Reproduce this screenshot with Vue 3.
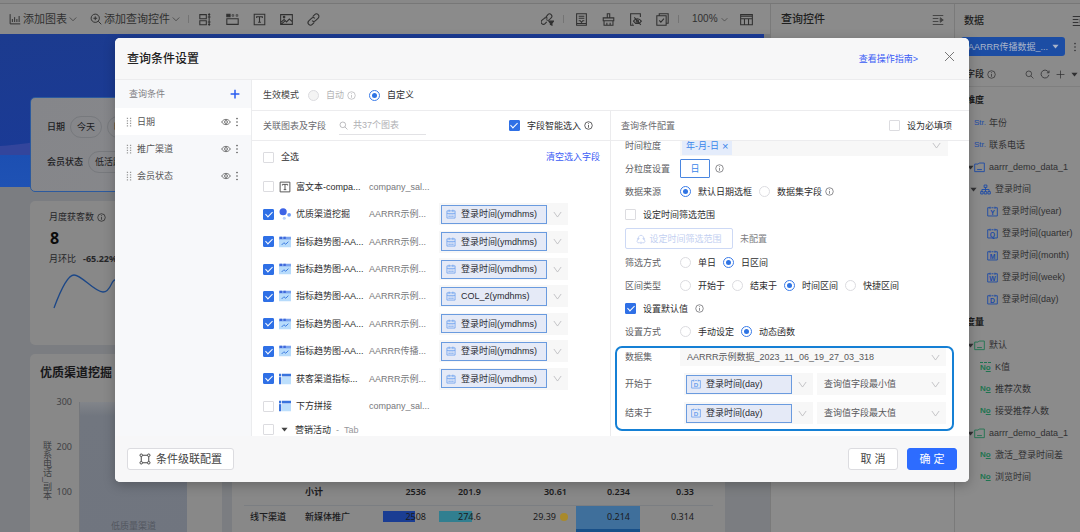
<script setup>
import { ref } from 'vue'

const icons = {
  chart: '<path d="M1.5 1.5v13h13.5M4.5 12V8M7.5 12V5.5M10.5 12V8M13.5 12V4"/>',
  zoomIn: '<circle cx="7" cy="7" r="5.5"/><path d="M11 11l4 4M4.5 7h5M7 4.5v5"/>',
  chevron: '<path d="M1.500 5l6.500 6.500L14.500 5"/>',
  down: '<path d="M1.500 3.500L8 12.500l6.500-9"/>',
  caret: '<path d="M1 4h14l-7 8.500z" fill="currentColor" stroke="none"/>',
  blocks: '<path d="M1 2h8v5H1zM1 9.500h8v5H1zM12.500 1v14M10.800 5h3.400M10.800 11h3.400M11.300 2.500l1.200-1.500 1.200 1.500M11.300 13.500l1.200 1.500 1.200-1.500"/>',
  tabs: '<path d="M1 7h14v7H1z"/><path d="M1 1.500h4v3H1z" fill="currentColor"/><path d="M7.500 2h2v2h-2zM12.500 2h2v2h-2z" stroke-width=".8"/>',
  text: '<path d="M1.500 1.500h13v13h-13zM4.500 6V4.500h7V6M8 4.500v7M6.300 11.500h3.400"/>',
  image: '<path d="M.8 2h14.400v12H.8zM1 11.500l4-3.500 3 3 3.500-3.500 3.500 3M1 14l5-4"/><circle cx="5" cy="5" r="1"/>',
  link: '<path d="M7 4.500l2.500-2.500a3 3 0 0 1 4.300 4.300L10.500 9.500a3 3 0 0 1-4.200 0M9 11.500l-2.500 2.500a3 3 0 0 1-4.300-4.300L5.500 6.500a3 3 0 0 1 4.200 0"/>',
  linkFilter: '<path d="M6 5l2.500-3a2.800 2.800 0 0 1 4 4L10.500 8a2.800 2.800 0 0 1-4 0M7 11l-2 2a2.800 2.800 0 0 1-4-4L4 6.500a2.800 2.800 0 0 1 4 0"/><path d="M9.500 10h6l-2 2.500V15l-2-1v-1.500z" fill="currentColor"/>',
  doc: '<path d="M2 1h12v14H2zM4.500 4h7M4.500 6.500h7M4.500 9.500h2l1.500 2 1.500-2h2M2 13h12"/>',
  brush: '<path d="M6.500 1h3v5h-3zM1.500 6h13v3.500h-13zM2.500 9.500V15h11V9.500M6 15v-3M10 15v-3"/>',
  hidden: '<path d="M14 5V1H2v14h4M4 13.500h1"/><path d="M5.500 10c2.500-4 7-4 9.700 0-2.700 4-7.200 4-9.700 0z"/><circle cx="10.300" cy="10" r="1.500"/><path d="M6.500 5.500l8 9"/>',
  multi: '<path d="M4 3.500V1h11v11.500h-2.500M1 3.500h11.500V15H1zM4 9l2 2.300L9.800 7"/>',
  table: '<path d="M.8 2h14.400v12.500H.8zM.8 4h14.400M.8 7h14.400M5.500 7v7.500M10.500 7v7.500"/>',
  collapse: '<path d="M1 2h14M1 6h7.500M1 10h7.500M1 14h14"/><path d="M11 5l4 3-4 3z" fill="currentColor"/>',
  search: '<circle cx="6.800" cy="6.800" r="5"/><path d="M10.500 10.500l4.500 4.500"/>',
  refresh: '<path d="M13.800 5.500A6.300 6.300 0 1 0 14.200 9.500M14.500 2.500v3.500H11"/>',
  plus: '<path d="M8 1v14M1 8h14"/>',
  close: '<path d="M1.500 1.500l13 13M14.500 1.500l-13 13"/>',
  info: '<circle cx="8" cy="8" r="6.700"/><path d="M8 7v5M8 4v1.500"/>',
  eye: '<path d="M1 8c3.500-5.600 10.500-5.600 14 0-3.500 5.600-10.500 5.600-14 0z"/><circle cx="8" cy="8" r="2.300"/>',
  dots: '<g fill="currentColor" stroke="none"><circle cx="8" cy="2.500" r="1.300"/><circle cx="8" cy="8" r="1.300"/><circle cx="8" cy="13.500" r="1.300"/></g>',
  grip: '<g fill="currentColor" stroke="none"><path d="M4.500 1h2v2h-2zM9.500 1h2v2h-2zM4.500 5h2v2h-2zM9.500 5h2v2h-2zM4.500 9h2v2h-2zM9.500 9h2v2h-2zM4.500 13h2v2h-2zM9.500 13h2v2h-2z"/></g>',
  calendar: '<path d="M1.500 3h13v11.500h-13zM1.500 7h13M5 1v3.500M11 1v3.500M4 9.500h2M7 9.500h2M10 9.500h2M4 12h2M7 12h2M10 12h2"/>',
  folder: '<path d="M1 14V3h5l1.500-1.500H15V14zM4.500 11h7"/>',
  tree: '<path d="M6 1.500h4v3.500H6zM1 11h3.500v3.500H1zM6.200 11h3.600v3.500H6.200zM11.500 11H15v3.500h-3.500zM8 5v6M2.800 11V8h10.400v3"/>',
  cascade: '<path d="M3 5v6M13 5v6M5 3h6M5 13h6"/><circle cx="3" cy="3" r="1.700"/><circle cx="13" cy="3" r="1.700"/><circle cx="3" cy="13" r="1.700"/><circle cx="13" cy="13" r="1.700"/>',
  range: '<path d="M4.500 8A4 4 0 1 1 11.500 8M4 7l-2.500 4.500 1.500 2.500h3M12 7l2.500 4.500-1.500 2.500h-3"/><circle cx="8" cy="14" r="1.200"/><circle cx="3.500" cy="7.500" r="1.200"/><circle cx="12.500" cy="7.500" r="1.200"/>',
  bubble: '<g stroke="none"><circle cx="5.500" cy="5" r="4.800" fill="#3d63e6"/><circle cx="13.500" cy="9" r="2.500" fill="#6f9df5"/><circle cx="7" cy="13.500" r="2" fill="#b9d3fb"/></g>',
  trend: '<g stroke="none"><path d="M0 2h16v13H0z" fill="#b7dbfb"/><path d="M0 1h16v3.500H0z" fill="#7aa3ee"/><path d="M1 1h3v3H1zM6 1h3v3H6z" fill="#3f67da"/></g><path d="M3.500 12l3-3 2.500 2 3.500-3.500" stroke="#3d7be0" stroke-width="1.300"/>',
  pivot: '<g stroke="none"><path d="M4 5h12v10H4z" fill="#bddffc"/><path d="M4 1h12v3.500H4z" fill="#3a74dd"/><path d="M0 1h3v3.500H0z" fill="#3a74dd"/><path d="M0 5.500h3V15H0z" fill="#3a74dd"/></g>'
}

const leftTools = ['blocks', 'tabs', 'text', 'image', 'link']
const midTools = ['doc', 'brush', 'hidden', 'multi']

const conditions = ['日期', '推广渠道', '会员状态']

const time = '登录时间(ymdhms)'
const charts = ref([
  { on: false, icon: 'text', name: '富文本-compa...', set: 'company_sal...' },
  { on: true, icon: 'bubble', name: '优质渠道挖掘', set: 'AARRR示例...', field: time },
  { on: true, icon: 'trend', name: '指标趋势图-AA...', set: 'AARRR示例...', field: time },
  { on: true, icon: 'trend', name: '指标趋势图-AA...', set: 'AARRR示例...', field: time },
  { on: true, icon: 'trend', name: '指标趋势图-AA...', set: 'AARRR示例...', field: 'COL_2(ymdhms)' },
  { on: true, icon: 'trend', name: '指标趋势图-AA...', set: 'AARRR示例...', field: time },
  { on: true, icon: 'trend', name: '指标趋势图-AA...', set: 'AARRR传播...', field: time },
  { on: true, icon: 'pivot', name: '获客渠道指标...', set: 'AARRR示例...', field: time },
  { on: false, icon: 'pivot', name: '下方拼接', set: 'company_sal...' }
])

const mode = ref('custom')
const smart = ref(true)
const useDefault = ref(true)
const source = ref('默认日期选框')
const filterBy = ref('日区间')
const rangeType = ref('时间区间')
const setBy = ref('动态函数')

const bounds = [
  { label: '开始于', value: '查询值字段最小值' },
  { label: '结束于', value: '查询值字段最大值' }
]

const fields = [
  { kind: 'str', level: 1, name: '年份' },
  { kind: 'str', level: 1, name: '联系电话' },
  { kind: 'folder', level: 1, name: 'aarrr_demo_data_1' },
  { kind: 'tree', level: 2, name: '登录时间' },
  { kind: 'cal', mark: 'Y', level: 3, name: '登录时间(year)' },
  { kind: 'cal', mark: 'Q', level: 3, name: '登录时间(quarter)' },
  { kind: 'cal', mark: 'M', level: 3, name: '登录时间(month)' },
  { kind: 'cal', mark: 'W', level: 3, name: '登录时间(week)' },
  { kind: 'cal', mark: 'D', level: 3, name: '登录时间(day)' }
]
const measures = [
  { kind: 'folder', level: 1, name: '默认' },
  { kind: 'calc', level: 2, name: 'K值' },
  { kind: 'num', level: 2, name: '推荐次数' },
  { kind: 'num', level: 2, name: '接受推荐人数' },
  { kind: 'folder', level: 1, name: 'aarrr_demo_data_1' },
  { kind: 'num', level: 2, name: '激活_登录时间差' },
  { kind: 'num', level: 2, name: '浏览时间' }
]
const fieldGroups = [
  { title: '维度', tone: 'blue', items: fields },
  { title: '度量', tone: 'green', items: measures }
]
</script>

<template>
  <div class="app">
    <div class="strip"></div>
    <div class="workspace">
      <main class="editor">
        <header class="toolbar">
          <button class="menu" type="button">
            <svg class="ic i12" viewBox="0 0 16 16" v-html="icons.chart"></svg>添加图表<svg class="ic i8" viewBox="0 0 16 16" v-html="icons.chevron"></svg>
          </button>
          <button class="menu second" type="button">
            <svg class="ic i12" viewBox="0 0 16 16" v-html="icons.zoomIn"></svg>添加查询控件<svg class="ic i8" viewBox="0 0 16 16" v-html="icons.chevron"></svg>
          </button>
          <i class="sep"></i>
          <div class="tools">
            <button v-for="t in leftTools" :key="t" type="button" :aria-label="t"><svg class="ic i14" viewBox="0 0 16 16" v-html="icons[t]"></svg></button>
          </div>
          <div class="tools right">
            <button type="button" aria-label="linkFilter"><svg class="ic i14" viewBox="0 0 16 16" v-html="icons.linkFilter"></svg></button>
          </div>
          <i class="sep near"></i>
          <div class="tools">
            <button v-for="t in midTools" :key="t" type="button" :aria-label="t"><svg class="ic i14" viewBox="0 0 16 16" v-html="icons[t]"></svg></button>
          </div>
          <i class="sep near"></i>
          <label class="zoom">
            <select aria-label="zoom"><option>100%</option></select>
            <svg class="ic i6" viewBox="0 0 16 16" v-html="icons.chevron"></svg>
          </label>
          <button type="button" aria-label="table"><svg class="ic i14" viewBox="0 0 16 16" v-html="icons.table"></svg></button>
        </header>

        <div class="canvas">
          <div class="hero"><svg class="wave" viewBox="0 0 120 20" preserveAspectRatio="none"><path d="M0 11C40 8 60 1 120 0v20H0z" /></svg></div>
          <section class="filters">
            <div class="filter"><b>日期</b><button class="pill" type="button">今天</button><button class="pill" type="button">昨天</button></div>
            <div class="filter"><b>会员状态</b><button class="pill" type="button">低活跃</button></div>
          </section>
          <section class="card metric">
            <p class="mlabel">月度获客数 <svg class="ic i8" viewBox="0 0 16 16" v-html="icons.info"></svg></p>
            <p class="mvalue">8</p>
            <p class="mlabel">月环比 <b>-65.22%</b></p>
            <svg class="spark" viewBox="0 0 84 38">
              <path d="M1 36C8 17 15 3 21 3c8 0 20 17 29 17 8 0 8-12 12-12 8 0 12 14 20 16" />
            </svg>
          </section>
          <div class="lower">
            <section class="card bubble">
              <h3>优质渠道挖掘</h3>
              <div class="plot">
                <span class="axis-name">联系电话_副本</span>
                <div class="ticks"><span>300</span><span>200</span><span>100</span><span>0</span></div>
                <div class="area"><span>低质量渠道</span></div>
              </div>
            </section>
            <section class="card grid-card">
              <table>
                <colgroup><col class="c0" /><col class="c1" /><col class="c2" /><col class="c3" /><col class="c4" /><col class="c5" /><col class="c6" /><col /></colgroup>
                <tbody>
                  <tr class="total"><td></td><td>小计</td><td class="n">2536</td><td class="n">201.9</td><td class="n">30.61</td><td class="n">0.234</td><td class="n">0.33</td><td></td></tr>
                  <tr>
                    <td class="strong">线下渠道</td><td class="strong">新媒体推广</td>
                    <td class="n"><span class="bar deep">2508</span></td>
                    <td class="n"><span class="bar teal">274.6</span></td>
                    <td class="n coin">29.39<i></i></td>
                    <td class="n heat">0.214</td><td class="n">0.314</td><td></td>
                  </tr>
                  <tr class="next"><td></td><td></td><td></td><td></td><td></td><td class="heat2"></td><td></td><td></td></tr>
                </tbody>
              </table>
            </section>
          </div>
        </div>
      </main>

      <aside class="controls">
        <h2>查询控件</h2>
        <button type="button" aria-label="collapse"><svg class="ic i12" viewBox="0 0 16 16" v-html="icons.collapse"></svg></button>
      </aside>

      <aside class="data">
        <div class="data-head"><h2>数据</h2><svg class="ic i12" viewBox="0 0 16 16" v-html="icons.collapse"></svg></div>
        <div class="dataset">
          <button class="ds" type="button"><span>AARRR传播数据_...</span><svg class="ic i6" viewBox="0 0 16 16" v-html="icons.caret"></svg></button>
          <svg class="ic i10" viewBox="0 0 16 16" v-html="icons.dots"></svg>
        </div>
        <div class="field-bar">
          <b>字段</b><svg class="ic i8" viewBox="0 0 16 16" v-html="icons.info"></svg>
          <span class="acts">
            <svg class="ic i9" viewBox="0 0 16 16" v-html="icons.search"></svg>
            <svg class="ic i10" viewBox="0 0 16 16" v-html="icons.refresh"></svg>
            <svg class="ic i8" viewBox="0 0 16 16" v-html="icons.plus"></svg>
            <svg class="ic i6" viewBox="0 0 16 16" v-html="icons.caret"></svg>
          </span>
        </div>
        <div v-for="g in fieldGroups" :key="g.title" :class="['group', g.tone]">
          <h4>{{ g.title }}</h4>
          <ul>
            <li v-for="(f, i) in g.items" :key="i" :class="'l' + f.level">
              <span class="fold"><svg v-if="f.kind === 'folder' || f.kind === 'tree'" class="ic i6" viewBox="0 0 16 16" v-html="icons.caret"></svg></span>
              <span class="fi">
                <template v-if="f.kind === 'str'">Str.</template>
                <span v-else-if="f.kind === 'num'" class="num">N<u>o</u></span>
                <span v-else-if="f.kind === 'calc'" class="num calc">N<u>o</u></span>
                <svg v-else-if="f.kind === 'cal'" class="ic i11" viewBox="0 0 16 16"><path d="M5 2.500H1v12h14v-12h-4M4.500 1v3M11.500 1v3M6.500 2.500h3" /><text x="8" y="12.500" text-anchor="middle">{{ f.mark }}</text></svg>
                <svg v-else class="ic i11" viewBox="0 0 16 16" v-html="icons[f.kind]"></svg>
              </span>
              {{ f.name }}
            </li>
          </ul>
        </div>
      </aside>
    </div>

    <div class="layer">
      <section class="modal" role="dialog" aria-labelledby="dlg-title">
        <header class="m-head">
          <h1 id="dlg-title">查询条件设置</h1>
          <a href="#guide">查看操作指南&gt;</a>
          <button type="button" aria-label="close"><svg class="ic i11" viewBox="0 0 16 16" v-html="icons.close"></svg></button>
        </header>
        <div class="m-body">
          <nav class="side">
            <div class="side-head">查询条件<button type="button" aria-label="add"><svg class="ic i10" viewBox="0 0 16 16" v-html="icons.plus"></svg></button></div>
            <div v-for="(c, i) in conditions" :key="c" :class="['cond', { active: i === 0 }]">
              <svg class="ic i10 grip" viewBox="0 0 16 16" v-html="icons.grip"></svg>
              <span>{{ c }}</span>
              <button type="button" aria-label="toggle"><svg class="ic i10" viewBox="0 0 16 16" v-html="icons.eye"></svg></button>
              <button type="button" aria-label="more"><svg class="ic i10" viewBox="0 0 16 16" v-html="icons.dots"></svg></button>
            </div>
          </nav>

          <div class="main">
            <div class="mode">
              <span>生效模式</span>
              <label class="opt off"><input v-model="mode" type="radio" name="mode" value="auto" disabled />自动 <svg class="ic i8 tail" viewBox="0 0 16 16" v-html="icons.info"></svg></label>
              <label class="opt"><input v-model="mode" type="radio" name="mode" value="custom" />自定义</label>
            </div>
            <div class="panes">
              <div class="pane linked">
                <div class="p-head">
                  <span>关联图表及字段</span>
                  <label class="search"><svg class="ic i9" viewBox="0 0 16 16" v-html="icons.search"></svg><input type="text" aria-label="search" placeholder="共37个图表" /></label>
                  <label class="opt"><input v-model="smart" type="checkbox" />字段智能选入 <svg class="ic i8 tail" viewBox="0 0 16 16" v-html="icons.info"></svg></label>
                </div>
                <div class="all">
                  <label class="opt"><input type="checkbox" />全选</label>
                  <button type="button">清空选入字段</button>
                </div>
                <div class="list">
                  <div v-for="(c, i) in charts" :key="i" class="row">
                    <label class="opt name"><input v-model="c.on" type="checkbox" /><svg class="ic i12" viewBox="0 0 16 16" v-html="icons[c.icon]"></svg>{{ c.name }}</label>
                    <span class="set">{{ c.set }}</span>
                    <button v-if="c.field" class="chip-select" type="button" aria-haspopup="listbox">
                      <span class="chip"><svg class="ic i10" viewBox="0 0 16 16" v-html="icons.calendar"></svg>{{ c.field }}</span>
                      <svg class="ic i8" viewBox="0 0 16 16" v-html="icons.down"></svg>
                    </button>
                  </div>
                  <div class="row tab">
                    <label class="opt"><input type="checkbox" /><svg class="ic i6" viewBox="0 0 16 16" v-html="icons.caret"></svg>营销活动</label>
                    <span class="muted">- &nbsp;Tab</span>
                  </div>
                </div>
              </div>

              <div class="pane config">
                <div class="p-head">
                  <span>查询条件配置</span>
                  <label class="opt"><input type="checkbox" />设为必填项</label>
                </div>
                <div class="form">
                  <div class="f">
                    <span class="lab">时间粒度</span>
                    <div class="multi"><button class="tag" type="button">年-月-日 <b>×</b></button><svg class="ic i8" viewBox="0 0 16 16" v-html="icons.down"></svg></div>
                  </div>
                  <div class="f"><span class="lab">分粒度设置</span><button class="day" type="button">日</button><svg class="ic i8" viewBox="0 0 16 16" v-html="icons.info"></svg></div>
                  <div class="f">
                    <span class="lab">数据来源</span>
                    <label v-for="o in ['默认日期选框', '数据集字段']" :key="o" class="opt"><input v-model="source" type="radio" name="source" :value="o" />{{ o }}</label>
                    <svg class="ic i8 tail" viewBox="0 0 16 16" v-html="icons.info"></svg>
                  </div>
                  <div class="f"><label class="opt"><input type="checkbox" />设定时间筛选范围</label></div>
                  <div class="f tall">
                    <button class="range" type="button" disabled><svg class="ic i10" viewBox="0 0 16 16" v-html="icons.range"></svg>设定时间筛选范围</button>
                    <span class="state">未配置</span>
                  </div>
                  <div class="f">
                    <span class="lab">筛选方式</span>
                    <label v-for="o in ['单日', '日区间']" :key="o" class="opt"><input v-model="filterBy" type="radio" name="filterBy" :value="o" />{{ o }}</label>
                  </div>
                  <div class="f">
                    <span class="lab">区间类型</span>
                    <label v-for="o in ['开始于', '结束于', '时间区间', '快捷区间']" :key="o" class="opt"><input v-model="rangeType" type="radio" name="rangeType" :value="o" />{{ o }}</label>
                  </div>
                  <div class="f"><label class="opt"><input v-model="useDefault" type="checkbox" />设置默认值</label><svg class="ic i8" viewBox="0 0 16 16" v-html="icons.info"></svg></div>
                  <div class="f">
                    <span class="lab">设置方式</span>
                    <label v-for="o in ['手动设定', '动态函数']" :key="o" class="opt"><input v-model="setBy" type="radio" name="setBy" :value="o" />{{ o }}</label>
                  </div>
                  <div class="focus">
                    <div class="fr first">
                      <label class="lab" for="dataset">数据集</label>
                      <div class="sel"><select id="dataset"><option>AARRR示例数据_2023_11_06_19_27_03_318</option></select><svg class="ic i8" viewBox="0 0 16 16" v-html="icons.down"></svg></div>
                    </div>
                    <div v-for="b in bounds" :key="b.label" class="fr">
                      <span class="lab">{{ b.label }}</span>
                      <button class="chip-select" type="button" aria-haspopup="listbox">
                        <span class="chip"><svg class="ic i10" viewBox="0 0 16 16"><path d="M5 2.500H1v12h14v-12h-4M4.500 1v3M11.500 1v3M6.500 2.500h3" /><text x="8" y="12.500" text-anchor="middle">D</text></svg>登录时间(day)</span>
                        <svg class="ic i8" viewBox="0 0 16 16" v-html="icons.down"></svg>
                      </button>
                      <div class="sel"><select :aria-label="b.label"><option>{{ b.value }}</option></select><svg class="ic i8" viewBox="0 0 16 16" v-html="icons.down"></svg></div>
                    </div>
                  </div>
                </div>
              </div>
            </div>
          </div>
        </div>
        <footer class="m-foot">
          <button class="btn cascade" type="button"><svg class="ic i12" viewBox="0 0 16 16" v-html="icons.cascade"></svg>条件级联配置</button>
          <button class="btn" type="button">取 消</button>
          <button class="btn primary" type="button">确 定</button>
        </footer>
      </section>
    </div>
  </div>
</template>

<style>
body { background: #8b8b8b; }
</style>

<style scoped>
* { box-sizing: border-box; margin: 0; }
.app {
  position: relative;
  height: 100vh;
  overflow: hidden;
  display: flex;
  flex-direction: column;
  font-family: "Liberation Sans", "Noto Sans CJK SC", sans-serif;
  font-size: 9px;
  line-height: 14px;
  color: #2b2b2d;
}
button, select, input { font: inherit; color: inherit; }
button { border: 0; background: none; padding: 0; display: inline-flex; align-items: center; justify-content: center; white-space: nowrap; }
select { appearance: none; border: 0; background: none; padding: 0; outline: 0; }
ul { list-style: none; padding: 0; }
a { text-decoration: none; }
.ic { flex: none; fill: none; stroke: currentColor; stroke-width: 1.3; }
.ic text { fill: currentColor; stroke: none; font-size: 10px; font-weight: 700; }
.i6 { width: 7px; height: 7px; }
.i8 { width: 9px; height: 9px; }
.i9 { width: 9px; height: 9px; }
.i10 { width: 10px; height: 10px; }
.i11 { width: 11px; height: 11px; }
.i12 { width: 12px; height: 12px; }
.i14 { width: 13px; height: 13px; }

/* workspace behind the dialog */
.strip { height: 4px; flex: none; background: #888; border-bottom: 1px solid #777; }
.workspace { flex: 1; min-height: 0; display: grid; grid-template-columns: minmax(0, 1fr) 184px 126px; }
.editor { display: flex; flex-direction: column; min-width: 0; min-height: 0; }
.toolbar { height: 30px; flex: none; display: flex; align-items: center; padding: 0 17px 0 9px; background: #8b8b8b; color: #303030; font-size: 11px; }
.menu { gap: 2px; }
.menu .i8 { width: 8px; height: 8px; }
.menu.second { margin-left: 13px; }
.sep { width: 1px; height: 8px; background: #747474; margin: 0 10px 0 8px; }
.sep.near { margin: 0 11px 0 9px; }
.tools { display: flex; gap: 14px; }
.tools.right { margin-left: auto; }
.zoom { display: flex; align-items: center; gap: 2px; margin: 0 12px 0 2px; font-size: 10px; }
.zoom select { width: 27px; }

.canvas { position: relative; flex: 1; min-height: 0; overflow: hidden; background: #7b7d81; padding: 63px 45px 0 30px; }
.hero { position: absolute; top: 0; left: 0; right: 6px; height: 153px; background: linear-gradient(#1c4fb2, #1f52b4) bottom / 100% 32px no-repeat, linear-gradient(170deg, #1c3b8e 0%, #1a3a97 50%, #2340a0 100%); }
.wave { position: absolute; left: 0; bottom: 32px; width: 120px; height: 20px; fill: #33459c; }
.filters { position: relative; height: 95px; padding: 18px 16px; border: 1px solid #2c5a9e; border-radius: 5px; background: linear-gradient(120deg, #85868a, #8c8c8c); margin-bottom: 9px; color: #1c1c1e; }
.filter { display: flex; align-items: center; gap: 5px; height: 22px; margin-bottom: 13px; }
.filter b { font-weight: 500; }
.pill { height: 22px; padding: 0 6px; border: 1px solid #77797d; border-radius: 11px; }
.card { background: #888; border-radius: 5px; }
.metric { position: relative; height: 144px; padding: 9px 19px; margin-bottom: 9px; color: #262628; }
.mlabel { display: flex; align-items: center; gap: 3px; }
.mlabel b { margin-left: 4px; font-family: "Noto Sans", sans-serif; }
.mvalue { font: 700 16px/24px "Noto Sans", sans-serif; color: #0c0c0c; margin: 2px 0 2px 1px; }
.spark { width: 84px; height: 38px; margin: 6px 0 0 4px; fill: none; stroke: #1c4787; stroke-width: 1.3; display: block; }
.lower { display: grid; grid-template-columns: 192px minmax(0, 1fr); gap: 10px; height: 180px; }
.bubble h3 { font-size: 12px; line-height: 18px; padding: 10px 10px 0; font-weight: 600; color: #171719; }
.plot { display: flex; color: #3f4144; margin-top: 13px; }
.axis-name { writing-mode: vertical-rl; text-orientation: mixed; height: 60px; margin: 46px 0 0 10px; line-height: 14px; white-space: nowrap; }
.ticks { width: 22px; display: flex; flex-direction: column; gap: 31px; text-align: right; margin-right: 3px; font-family: "Noto Sans", sans-serif; }
.ticks span { padding-right: 4px; }
.area { margin-top: 7px; width: 108px; height: 140px; background: linear-gradient(#82858a 0, #71767f 14px, #70757f); border-left: 1px solid #75777b; display: flex; justify-content: center; padding-top: 117px; color: #53575f; }
.grid-card { padding: 125px 12px 0 12px; overflow: hidden; }
table { width: 100%; border-collapse: collapse; table-layout: fixed; font-family: "Noto Sans", "Noto Sans CJK SC", sans-serif; color: #1b1b1d; }
.c0 { width: 55px; } .c1 { width: 80px; } .c2 { width: 57px; } .c3 { width: 55px; } .c4 { width: 85px; } .c5 { width: 64px; } .c6 { width: 64px; }
td { height: 24px; padding: 0 0 0 6px; white-space: nowrap; }
.total td { font-weight: 600; border-bottom: 1px solid #7b7e82; height: 26px; }
.strong { font-weight: 500; }
td.n { text-align: right; padding: 0 10px 0 0; }
.total td:nth-child(5) { padding-right: 9px; }
.bar { display: inline-block; padding: 0 0 0 22px; line-height: 11px; }
.deep { background: linear-gradient(90deg, #1a3d93 74%, transparent 74%); }
.teal { padding-left: 19px; background: linear-gradient(90deg, #317f90 79%, transparent 79%); }
td.coin { padding-right: 8px; }
.coin i { display: inline-block; width: 8px; height: 8px; margin: 0 0 2px 4px; border-radius: 50%; background: #a98a2b; vertical-align: middle; }
td.heat { background: #3f6f9b; }
.heat2 { background: #184f88; }

.controls { display: flex; justify-content: space-between; align-items: flex-start; padding: 7px 10px 0 10px; border-left: 1px solid #7a7a7a; background: #8b8b8b; }
h2 { font-size: 11px; line-height: 16px; font-weight: 500; color: #1f1f1f; }
.controls button { margin-top: 3px; color: #444; }
.data { border-left: 1px solid #7a7a7a; background: #8b8b8b; overflow: hidden; white-space: nowrap; color: #303032; }
.data-head { display: flex; justify-content: space-between; align-items: center; padding: 9px 0 0 9px; height: 25px; margin-right: -4px; }
.data-head h2 { font-size: 10px; }
.dataset { display: flex; align-items: center; gap: 5px; padding-left: 6px; margin: 8px 0 0; height: 19px; }
.ds { width: 106px; height: 19px; background: #1c4da4; color: #a9b4c9; border-radius: 3px; justify-content: space-between; padding: 0 6px 0 7px; }
.field-bar { display: flex; align-items: center; gap: 3px; height: 31px; padding: 6px 0 0 11px; border-bottom: 1px solid #7f7f7f; }
.field-bar b { font-weight: 500; color: #222; }
.acts { display: flex; align-items: center; gap: 6px; margin-left: auto; padding-right: 2px; }
.group h4 { height: 24px; line-height: 24px; padding-left: 11px; font-size: 9px; font-weight: 600; color: #1c1c1c; }
.blue { padding-top: 1px; }
.group li { height: 22px; display: flex; align-items: center; }
.fold { width: 7px; display: flex; }
.fi { width: 15px; display: flex; align-items: center; color: #1c4aa6; flex: none; font-size: 8px; }
.green .fi { color: #1f7450; }
.l1 { padding-left: 12px; }
.l2 { padding-left: 15px; }
.l2 .fold { margin-right: 3px; }
.l3 { padding-left: 25px; }
.num { font-weight: 700; }
.calc { border-top: 1px dashed currentColor; line-height: 9px; }

/* dialog */
.layer { position: absolute; inset: 0; display: flex; padding: 38px 111px 50px 115px; }
.modal { flex: 1; min-width: 0; display: flex; flex-direction: column; background: #fff; border-radius: 5px; overflow: hidden; box-shadow: 0 3px 12px rgba(0, 0, 0, .25); }
.m-head { height: 42px; flex: none; display: flex; align-items: center; padding: 0 14px 0 12px; background: #f7f7f8; border-bottom: 1px solid #ececee; }
h1 { font-size: 12px; font-weight: 500; flex: 1; color: #222; }
.m-head a { color: #3a5cf5; margin-right: 26px; }
.m-head button { color: #666; margin-bottom: 4px; }
.m-body { flex: 1; min-height: 0; display: flex; }
.side { width: 137px; flex: none; background: #f7f8fa; border-right: 1px solid #ebecee; color: #555; }
.side-head { height: 28px; display: flex; align-items: center; justify-content: space-between; padding: 0 11px 0 14px; color: #808084; }
.side-head .ic { color: #2a5cf0; stroke-width: 2.4; }
.cond { height: 27px; display: flex; align-items: center; padding: 0 9px; gap: 1px; }
.cond span { flex: 1; padding-left: 2px; }
.cond.active { background: #fff; }
.grip { color: #999; }
.main { flex: 1; min-width: 0; display: flex; flex-direction: column; }
.mode { height: 31px; flex: none; display: flex; align-items: center; padding-left: 11px; border-bottom: 1px solid #ececee; color: #444; }
.mode > span { margin-right: 9px; }
.opt { display: inline-flex; align-items: center; gap: 7px; color: #2c2c2e; white-space: nowrap; }
.tail { margin-left: -4px; }
.mode .off { color: #b4b4b6; margin-right: 13px; }
input[type="radio"], input[type="checkbox"] { appearance: none; flex: none; width: 11px; height: 11px; margin: 0; border: 1px solid #dcdce0; background: #fff; display: grid; place-items: center; }
input[type="radio"] { border-radius: 50%; }
input[type="checkbox"] { border-radius: 1px; }
input[type="radio"]:disabled { background: #f4f4f4; }
input[type="radio"]:checked { border-color: #3a7be8; }
input[type="radio"]:checked::after { content: ""; width: 5px; height: 5px; border-radius: 50%; background: #2f74e4; }
input[type="checkbox"]:checked { background: #2f70e6; border-color: #2f70e6; }
input[type="checkbox"]:checked::after { content: ""; width: 3px; height: 6px; margin-top: -2px; border: solid #fff; border-width: 0 1px 1px 0; transform: rotate(45deg); }
.panes { flex: 1; min-height: 0; display: grid; grid-template-columns: minmax(0, 359fr) minmax(0, 358fr); }
.pane { min-width: 0; min-height: 0; display: flex; flex-direction: column; }
.linked { border-right: 1px solid #ebebed; }
.p-head { height: 30px; flex: none; display: flex; align-items: center; border-bottom: 1px solid #ececee; color: #6a6a6e; }
.linked .p-head { padding: 0 17px 0 11px; }
.search { display: flex; align-items: center; gap: 5px; width: 87px; height: 18px; margin: 0 auto 0 13px; border-bottom: 1px solid #e2e2e5; color: #a5a5a8; }
.search input { width: 68px; border: 0; padding: 0; outline: 0; background: none; }
.search input::placeholder { color: #b0b0b4; }
.all { height: 32px; flex: none; display: flex; align-items: center; justify-content: space-between; padding: 0 10px 0 11px; }
.all button { color: #3a5cf5; }
.list { flex: 1; min-height: 0; display: flex; flex-direction: column; overflow: hidden; }
.row { flex: 1; min-height: 0; display: flex; align-items: center; padding-left: 11px; }
.name { width: 106px; gap: 5px; }
.name > .ic { color: #555; }
.set { width: 70px; color: #77777b; white-space: nowrap; }
.chip-select { height: 22px; background: #f7f7f7; padding: 0 6px 0 2px; gap: 6px; color: #2a2a33; }
.chip-select > .ic, .multi > .ic, .sel > .ic { color: #b2b2b6; }
.chip { width: 106px; height: 19px; display: flex; align-items: center; gap: 5px; padding-left: 4px; border: 1px solid #6a9bdf; background: #e5eaf7; }
.chip .ic { color: #6ba0ee; }
.row.tab { flex: none; height: 16px; padding-top: 3px; align-items: flex-start; }
.tab .ic { color: #444; }
.muted { color: #97979b; margin-left: 5px; }
.config .p-head { padding: 0 17px 0 10px; justify-content: space-between; }
.form { flex: 1; min-height: 0; display: flex; flex-direction: column; justify-content: flex-end; overflow: hidden; padding: 0 15px 5px 4px; }
.f { height: 23px; flex: none; display: flex; align-items: center; gap: 7px; padding-left: 10px; }
.f.tall { height: 25px; }
.lab { width: 55px; flex: none; color: #606064; }
.f .lab { margin-right: -7px; }
.multi { flex: 1; height: 20px; margin-right: 6px; display: flex; align-items: center; justify-content: space-between; background: #f7f7f7; padding: 0 7px 0 2px; }
.tag { height: 18px; background: #e4ecfb; color: #3a86ea; padding: 0 4px; gap: 3px; }
.tag b { font-weight: 400; font-size: 11px; }
.day { width: 30px; height: 19px; border: 1px solid #4a86e0; border-radius: 1px; color: #3a86ea; }
.day + .ic { margin-left: -2px; }
.range { width: 108px; height: 21px; gap: 3px; border: 1px solid #cdd9f5; border-radius: 2px; color: #c3d0f1; }
.state { color: #7e7e82; }
.f .ic { color: #66666a; }
.f .range .ic { color: #c3d0f1; }
.f .multi > .ic { color: #b2b2b6; }
.focus { flex: none; margin-top: 3px; border: 2px solid #1580d5; border-radius: 7px; padding: 0 6px 5px 8px; display: flex; flex-direction: column; gap: 7px; }
.fr { height: 22px; display: flex; align-items: center; }
.fr.first { height: 18px; }
.fr .chip-select { margin: 0 4px; flex: none; }
.sel { flex: 1; min-width: 0; height: 100%; display: flex; align-items: center; background: #f8f8f8; padding: 0 6px 0 7px; color: #58585c; }
.sel select { flex: 1; min-width: 0; }
.m-foot { height: 46px; flex: none; display: flex; align-items: center; gap: 9px; padding: 0 12px; background: #f7f7f8; }
.btn { height: 22px; width: 50px; border: 1px solid #dcdce0; border-radius: 3px; background: #fff; font-size: 11px; color: #444; }
.cascade { width: 107px; gap: 5px; margin-right: auto; }
.primary { background: #2d6cff; border-color: #2d6cff; color: #fff; }
</style>
